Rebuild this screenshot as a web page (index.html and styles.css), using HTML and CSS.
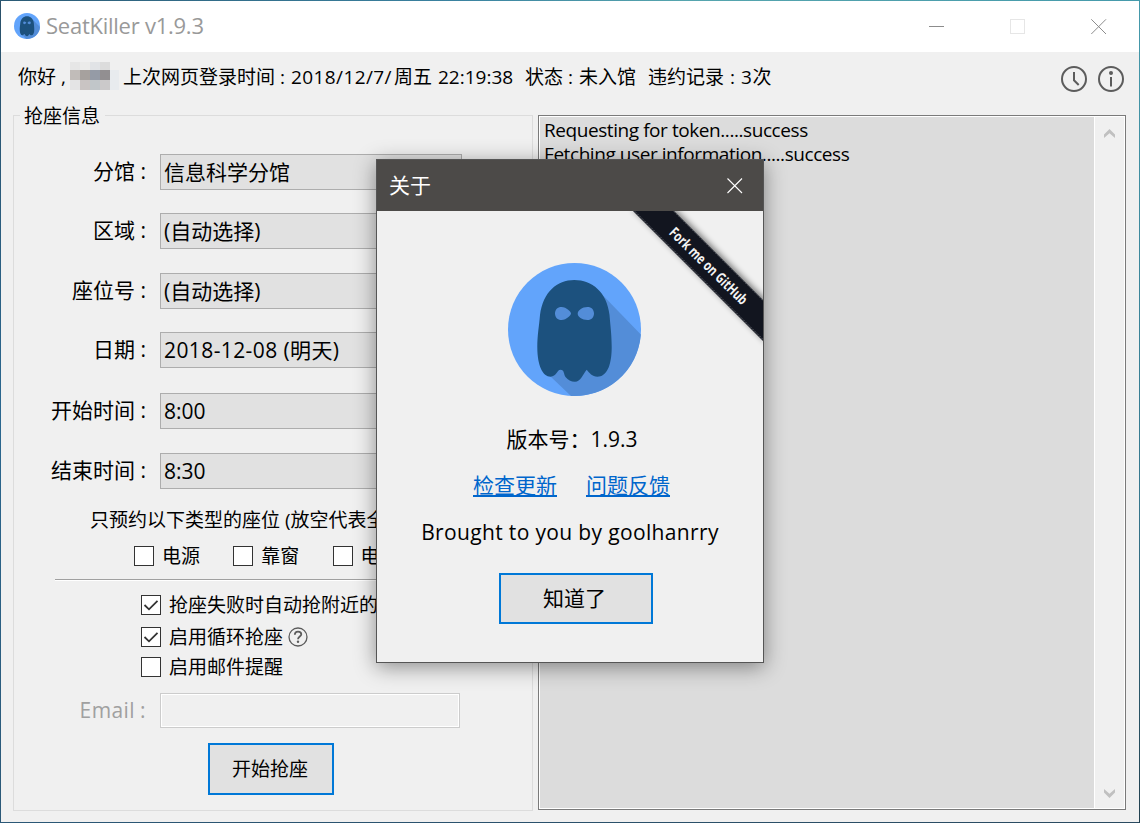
FILE: index.html
```html
<!DOCTYPE html>
<html lang="zh-CN">
<head>
<meta charset="utf-8">
<title>SeatKiller v1.9.3</title>
<link rel="stylesheet" href="styles.css">
</head>
<body>
<svg class="defs" width="0" height="0">
  <symbol id="ghost" viewBox="0 0 133 133">
    <circle cx="66.5" cy="66.5" r="66.5" fill="#62a4fb"/>
    <path fill="#538dd8" d="M95.3 32.7 132.8 71.5A66.5 66.5 0 0 1 63 132.9L42 113Z"/>
    <path fill="#1c517e" d="M66.3 17C49 17 35 29 32 52C31 64 29.3 72 29.3 84C29.3 103 35 113.7 42.5 113.7C48.5 113.7 49 106.8 52.5 106.8C56.5 106.8 55.5 111.5 57.5 114C60 117 63 118.8 67 118.8C72.500 118.800 75 111.500 78.700 106.800C81.500 110 84 113.700 89.500 113.700C98 113.700 103.700 104 103.700 84C103.700 72 102.500 64 101.500 52C99 29 84 17 66.300 17Z"/>
    <path fill="#538dd8" d="M63 50.500C63 52 58.500 57 53.500 57C49.500 57 47 54.300 47 50.500S49.500 44 53.500 44C58.500 44 63 49 63 50.500ZM69.700 50.800C69.700 47.500 74 44 79.500 44C83.500 44 86 46.700 86 50.500S83.500 57 79.500 57C74 57 69.700 54 69.700 50.800Z"/>
  </symbol>
</svg>

<div class="window">
  <header class="titlebar">
    <svg class="app-icon"><use href="#ghost"/></svg>
    <h1 class="app-title">SeatKiller v1.9.3</h1>
    <svg class="win-buttons" width="178" height="16" viewBox="0 0 178 16">
      <path d="M0 7.500H15" stroke="#8c8c8c"/>
      <rect x="81.500" y=".5" width="14" height="14" fill="none" stroke="#e6e6e6"/>
      <path d="M162.300 .3 177 15M177 .3 162.300 15" stroke="#8c8c8c"/>
    </svg>
  </header>

  <div class="status">
    <span class="hello">你好 ,</span>
    <svg class="mosaic" width="50" height="28" shape-rendering="crispEdges">
      <path fill="#e6e6e6" d="M0 0h10v8H0z"/><path fill="#ebebea" d="M10 0h10v8H10z"/><path fill="#e1e3e6" d="M20 0h10v8H20z"/><path fill="#dcdcdc" d="M30 0h10v8H30z"/>
      <path fill="#c1bcb9" d="M0 8h10v10H0z"/><path fill="#a6a19e" d="M10 8h10v10H10z"/><path fill="#959ba6" d="M20 8h10v10H20z"/><path fill="#928f91" d="M30 8h10v10H30z"/><path fill="#e8ebee" d="M40 8h9v20h-9z"/>
      <path fill="#e4e4e5" d="M0 18h10v10H0z"/><path fill="#c9c4c3" d="M10 18h10v10H10z"/><path fill="#c1c6c9" d="M20 18h10v10H20z"/><path fill="#cbc9ca" d="M30 18h10v10H30z"/>
    </svg>
    <span class="login-label">上次网页登录时间</span><span class="colon">:</span>
    <span class="login-date">2018/12/7/</span><span class="login-day">周五</span>
    <span class="login-time">22:19:38</span>
    <span class="state-label">状态</span><span class="colon">:</span><span class="state">未入馆</span>
    <span class="breach-label">违约记录</span><span class="colon">:</span><span class="breach">3次</span>
    <svg class="tool" width="26" height="26" viewBox="0 0 26 26" fill="none" stroke="#5c5c5c" stroke-width="2">
      <circle cx="13" cy="13" r="12"/><path d="M13 6v8.300l4.700 4.700"/>
    </svg>
    <svg class="tool" width="26" height="26" viewBox="0 0 26 26" fill="none" stroke="#5c5c5c" stroke-width="2">
      <circle cx="13" cy="13" r="12"/><path d="M13 11v9.500"/><circle cx="13" cy="7" r="2" fill="#5c5c5c" stroke="none"/>
    </svg>
  </div>

  <main class="panes">
    <section class="group">
      <h2 class="legend">抢座信息</h2>
      <div class="fields">
        <label class="label">分馆<i>:</i></label><div class="combo">信息科学分馆</div>
        <label class="label">区域<i>:</i></label><div class="combo">(自动选择)</div>
        <label class="label">座位号<i>:</i></label><div class="combo">(自动选择)</div>
        <label class="label">日期<i>:</i></label><div class="combo date">2018-12-08 (明天)</div>
        <label class="label">开始时间<i>:</i></label><div class="combo">8:00</div>
        <label class="label">结束时间<i>:</i></label><div class="combo">8:30</div>
      </div>
      <p class="hint">只预约以下类型的座位 (放空代表全部)</p>
      <div class="types">
        <label class="check"><span class="box"></span>电源</label>
        <label class="check"><span class="box"></span>靠窗</label>
        <label class="check"><span class="box"></span>电脑</label>
      </div>
      <div class="rule"></div>
      <div class="options">
        <label class="check"><span class="box"><svg width="18" height="18"><path d="M2.500 9 7 13.300 15.500 4.800"/></svg></span>抢座失败时自动抢附近的座位</label>
        <label class="check"><span class="box"><svg width="18" height="18"><path d="M2.500 9 7 13.300 15.500 4.800"/></svg></span>启用循环抢座
          <svg class="help" width="20" height="20" viewBox="0 0 20 20" fill="none" stroke="#5c5c5c">
            <circle cx="10" cy="10" r="9" stroke-width="1.300"/>
            <path stroke-width="1.800" d="M6.800 7.800C6.900 5.700 8.200 4.600 10 4.600C12 4.600 13.300 5.700 13.300 7.300C13.300 9.400 10 9.800 10 12.200"/>
            <circle cx="10" cy="14.800" r="1.200" fill="#5c5c5c" stroke="none"/>
          </svg></label>
        <label class="check"><span class="box"></span>启用邮件提醒</label>
      </div>
      <div class="email"><label class="label">Email<i>:</i></label><div class="input"></div></div>
      <div class="button start">开始抢座</div>
    </section>

    <section class="log">
      <div class="log-text">
        <p class="line">Requesting for token.....success</p>
        <p class="line">Fetching user information.....success</p>
      </div>
      <div class="scroll">
        <svg width="11" height="10" viewBox="0 0 11 10"><path fill="#c0c0c0" d="M0 5.500 5.500 0 11 5.500V9L5.500 4.200 0 9Z"/></svg>
        <svg width="11" height="10" viewBox="0 0 11 10"><path fill="#c0c0c0" d="M0 0 5.500 4.800 11 0V3.500L5.500 9 0 3.500Z"/></svg>
      </div>
    </section>
  </main>
</div>

<div class="dialog">
  <header class="dialog-title"><span>关于</span>
    <svg width="16" height="16"><path d="M.5 .5 15 15M15 .5 .5 15" stroke="#fff" stroke-width="1.100"/></svg>
  </header>
  <div class="dialog-body">
    <svg class="ribbon" width="140" height="140" viewBox="0 0 140 140">
      <defs><filter id="soft" x="-20%" y="-20%" width="140%" height="140%"><feGaussianBlur stdDeviation="3"/></filter></defs>
      <path d="M9 -3 51 -3 143 89V131Z" fill="#000" opacity=".5" filter="url(#soft)"/>
      <path d="M0 -10H41L150 99V140Z" fill="#12151f"/>
      <path d="M11 -.5 141 129.500M50 -.5 141 90.500" stroke="#666a72" stroke-dasharray="1.500 1"/>
      <text class="ribbon-text" x="0" y="0" transform="translate(85.500 55) rotate(44.500)" text-anchor="middle" dy="5" textLength="103" lengthAdjust="spacingAndGlyphs">Fork me on GitHub</text>
    </svg>
    <svg class="logo"><use href="#ghost"/></svg>
    <p class="version"><span>版本号：</span><span class="num">1.9.3</span></p>
    <p class="links"><a>检查更新</a><a>问题反馈</a></p>
    <p class="credit">Brought to you by goolhanrry</p>
    <div class="button ok">知道了</div>
  </div>
</div>
</body>
</html>
```

FILE: styles.css
```css
* { box-sizing: border-box; }

body {
  margin: 0;
  width: 1140px;
  height: 823px;
  overflow: hidden;
  position: relative;
  font-family: "Open Sans", "Noto Sans CJK SC", sans-serif;
  font-size: 19px;
  line-height: 24px;
  color: #000;
  white-space: nowrap;
}

h1, h2, p { margin: 0; font-weight: 400; }
i { font-style: normal; }
svg { display: block; flex: none; }
.defs { position: absolute; }

.window {
  width: 1140px;
  height: 823px;
  padding: 1px;
  background:
    linear-gradient(90deg, #2b5a75, #3a82a0 40%, #56a5ae 60%, #459aab) top / 100% 1px no-repeat,
    linear-gradient(#2a5069, #2a678f 50%, #2b5877) left / 1px 100% no-repeat,
    linear-gradient(#459aab, #35788f 60%, #22404f) right / 1px 100% no-repeat,
    linear-gradient(90deg, #2b5877, #2a4a60) bottom / 100% 1px no-repeat;
}

.titlebar {
  height: 51px;
  padding: 0 32px 0 13px;
  display: flex;
  align-items: center;
  background: #fff;
}
.app-icon { width: 26px; height: 26px; margin-bottom: 2px; }
.app-title { margin: 0 0 3px 6px; font-size: 22px; color: #999; letter-spacing: -0.25px; }
.win-buttons { margin-left: auto; fill: none; }

.status {
  height: 63px;
  padding: 11px 15px 0 17px;
  display: flex;
  align-items: flex-start;
  line-height: 28px;
  background: #f0f0f0;
}
.status span { flex: none; }
.hello { width: 52px; }
.mosaic { margin: -1px 3px 0 0; }
.login-label { width: 152px; }
.colon { width: 16px; padding-left: 5px; }
.login-date { width: 103px; letter-spacing: .4px; }
.login-day { width: 44px; }
.login-time { width: 87px; }
.state-label { width: 38px; }
.state { width: 69px; }
.breach-label { width: 77px; }
.breach { margin-right: auto; letter-spacing: .6px; }
.tool { margin: 3px 0 0 11px; }

.panes {
  height: 707px;
  padding: 0 13px 12px 12px;
  display: grid;
  grid-template-columns: 520px 588px;
  column-gap: 5px;
  background: #f0f0f0;
}

.group { margin-bottom: -1px; border: 1px solid #dcdcdc; }
.legend {
  width: 85px;
  height: 24px;
  margin: -12px 0 0 6px;
  padding-left: 4px;
  font-size: 19px;
  line-height: 24px;
  background: #f0f0f0;
}
.fields {
  margin-top: 26px;
  display: grid;
  grid-template-columns: 132px 302px;
  grid-template-rows: 59px 60px 59px 61px 60px 36px;
  column-gap: 14px;
  align-items: start;
  font-size: 21px;
  line-height: 34px;
}
.label { text-align: right; }
.label i { display: inline-block; width: 11px; text-align: right; }
.combo { height: 36px; padding-left: 3px; border: 1px solid #adadad; background: #e1e1e1; }
.date { letter-spacing: .4px; }
.hint { margin: 19px 0 0 76px; }
.types { display: flex; padding-left: 120px; margin-top: 14px; }
.types .check { width: 99.300px; }
.check { display: flex; align-items: center; height: 20px; }
.box { flex: none; width: 20px; height: 20px; margin-right: 8px; border: 1px solid #333; background: #fff; }
.box path { fill: none; stroke: #333; stroke-width: 1.800; }
.rule { width: 420px; height: 2px; margin: 13px 0 0 41px; background: #fff; border-top: 1px solid #a0a0a0; }
.options { padding: 14px 0 0 127px; display: grid; grid-template-rows: 32px 30px 20px; }
.help { margin-left: 4.500px; }
.email {
  margin-top: 16px;
  display: grid;
  grid-template-columns: 132px 300px;
  column-gap: 14px;
  font-size: 21px;
  line-height: 34px;
  letter-spacing: .4px;
  color: #a0a0a0;
}
.input { height: 35px; border: 1px solid #ccc; box-shadow: inset 0 0 0 1px #fff; }

.button {
  display: flex;
  align-items: center;
  justify-content: center;
  border: 2px solid #0078d7;
  background: #e1e1e1;
}
.start { width: 126px; height: 52px; margin: 15px 0 0 194px; padding-right: 2px; }

.log {
  display: flex;
  border: 1px solid #7a7a7a;
  padding: 1px;
  background: #fff;
}
.log-text { flex: 1; padding: 1px 4px; background: #dcdcdc; letter-spacing: -.43px; }
.line { height: 24px; }
.scroll {
  width: 29px;
  margin-left: 1px;
  padding: 12px 0 9px 9px;
  display: flex;
  flex-direction: column;
  justify-content: space-between;
  background: #f0f0f0;
}

/* The dialog floats over the main window. */
.dialog {
  position: absolute;
  left: 376px;
  top: 159px;
  width: 388px;
  height: 504px;
  border: 1px solid #555;
  background: #f0f0f0;
  box-shadow: 0 4px 20px rgba(0, 0, 0, .42);
  font-size: 21px;
}
.dialog-title {
  height: 51px;
  padding: 0 20px 0 12px;
  display: flex;
  align-items: center;
  justify-content: space-between;
  background: #4c4a48;
  color: #fff;
}
.dialog-title span { margin-bottom: 2px; }
.dialog-body {
  position: relative;
  height: 451px;
  padding-top: 52px;
  display: flex;
  flex-direction: column;
  align-items: center;
}
.ribbon { position: absolute; right: 0; top: 0; overflow: hidden; }
.ribbon-text { font-family: "Open Sans", sans-serif; font-weight: 700; font-size: 14.500px; fill: #f4f4f4; }
.logo { width: 133px; height: 133px; margin-right: -9px; }
.version { margin: 31px 0 0 4px; display: flex; }
.links { margin: 22px 0 0 3px; display: flex; column-gap: 29px; color: #0066cc; }
.links a { text-decoration: underline; }
.credit { margin: 23px 0 0; letter-spacing: .35px; }
.ok { width: 154px; height: 51px; margin: 29px 0 0 12px; padding: 0 3px 2px 0; }
```
